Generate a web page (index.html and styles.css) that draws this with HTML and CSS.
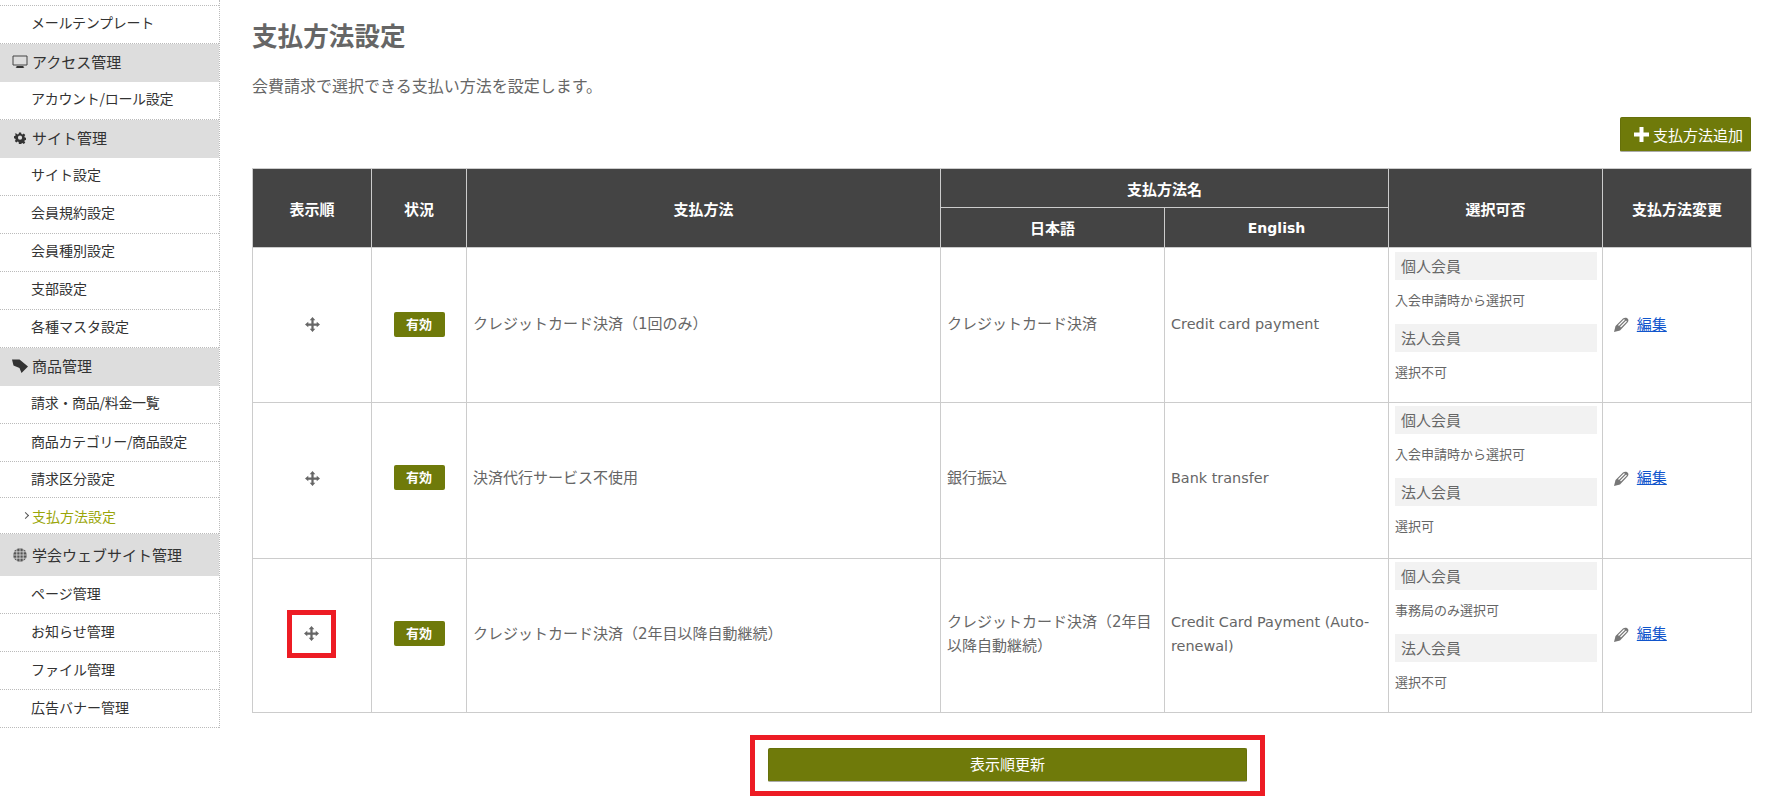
FILE: index.html
```html
<!DOCTYPE html>
<html lang="ja">
<head>
<meta charset="utf-8">
<title>支払方法設定</title>
<link rel="stylesheet" href="styles.css">
</head>
<body>
<div class="page">
  <aside class="sidebar">
    <a class="item item-kana">メールテンプレート</a>
    <div class="group">
      <svg class="gicon" viewBox="0 0 16 16"><path class="ol" d="M1 2h14v9H1z"/><path d="M4.500 12h7v1.200l1 .8h-9l1-.8z"/></svg>
      アクセス管理
    </div>
    <a class="item item-kana">アカウント/ロール設定</a>
    <div class="group">
      <svg class="gicon gicon-gear" viewBox="0 0 16 16"><path fill-rule="evenodd" d="M6.500 0h3l.5 2.300 1.400.6 2-1.300 2.100 2.100-1.300 2 .6 1.400 2.200.5v3l-2.200.5-.6 1.400 1.300 2-2.100 2.100-2-1.300-1.400.6-.5 2.100h-3L6 13.700l-1.400-.6-2 1.300L.5 12.300l1.300-2-.6-1.400L-1 8.400v-3l2.200-.5.6-1.400-1.300-2L2.600 1.600l2 1.300L6 2.300zM8 4.500a3 3 0 1 0 0 6 3 3 0 0 0 0-6z" transform="translate(.6 .6) scale(.93)"/></svg>
      サイト管理
    </div>
    <a class="item">サイト設定</a>
    <a class="item">会員規約設定</a>
    <a class="item">会員種別設定</a>
    <a class="item">支部設定</a>
    <a class="item">各種マスタ設定</a>
    <div class="group">
      <svg class="gicon" viewBox="0 0 16 16"><path d="M0 1.500h7.500L16 8.500 9.500 15 7.500 10 1.500 7.500z"/></svg>
      商品管理
    </div>
    <a class="item item-kana">請求・商品/料金一覧</a>
    <a class="item item-kana item-low">商品カテゴリー/商品設定</a>
    <a class="item item-short item-low">請求区分設定</a>
    <a class="item item-short item-active">支払方法設定</a>
    <div class="group group-tall">
      <svg class="gicon" viewBox="0 0 16 16"><circle cx="8" cy="8" r="6.800" fill="#555"/><path class="grid" d="M8 1v14M4.800 2v12M11.200 2v12M1 8h14M2 4.800h12M2 11.200h12"/></svg>
      学会ウェブサイト管理
    </div>
    <a class="item item-low">ページ管理</a>
    <a class="item item-low">お知らせ管理</a>
    <a class="item item-low">ファイル管理</a>
    <a class="item item-low">広告バナー管理</a>
  </aside>

  <main class="content">
    <h1 class="title">支払方法設定</h1>
    <p class="lead">会費請求で選択できる支払い方法を設定します。</p>
    <div class="toolbar">
      <button class="btn-add" type="button">
        <svg class="plus" viewBox="0 0 15 15"><path d="M5.500 0h4v5.500H15v4H9.500V15h-4V9.500H0v-4h5.500z"/></svg>
        支払方法追加
      </button>
    </div>

    <table class="methods">
      <colgroup>
        <col class="c1"><col class="c2"><col class="c3"><col class="c4"><col class="c5"><col class="c6"><col class="c7">
      </colgroup>
      <thead>
        <tr class="head-a">
          <th rowspan="2">表示順</th>
          <th rowspan="2">状況</th>
          <th rowspan="2">支払方法</th>
          <th colspan="2">支払方法名</th>
          <th rowspan="2">選択可否</th>
          <th rowspan="2">支払方法変更</th>
        </tr>
        <tr class="head-b">
          <th>日本語</th>
          <th class="en-head">English</th>
        </tr>
      </thead>
      <tbody>
        <tr class="row-a">
          <td class="center">
            <svg class="move" viewBox="0 0 16 16"><path d="M8 0l3 3.500H9.200V6.800h3.300V5L16 8l-3.500 3V9.200H9.200v3.300H11L8 16l-3-3.500h1.800V9.200H3.500V11L0 8l3.500-3v1.800h3.300V3.500H5z"/></svg>
          </td>
          <td class="center"><span class="badge">有効</span></td>
          <td>クレジットカード決済（1回のみ）</td>
          <td>クレジットカード決済</td>
          <td class="en">Credit card payment</td>
          <td class="avail">
            <div class="label">個人会員</div>
            <div class="note">入会申請時から選択可</div>
            <div class="label">法人会員</div>
            <div class="note">選択不可</div>
          </td>
          <td class="edit">
            <svg class="pencil" viewBox="0 0 16 16"><path class="pencil-body" d="M1 15l1.500-6L10 1.500c1.500-1 4-1 5 .5s0 3-1 4l-7 7.500z"/><path class="pencil-slit" d="M11.500 2.500 5.500 8.500M13.500 4 7.500 10"/></svg>
            <a class="link" href="#">編集</a>
          </td>
        </tr>
        <tr class="row-b">
          <td class="center">
            <svg class="move" viewBox="0 0 16 16"><path d="M8 0l3 3.500H9.200V6.800h3.300V5L16 8l-3.500 3V9.200H9.200v3.300H11L8 16l-3-3.500h1.800V9.200H3.500V11L0 8l3.500-3v1.800h3.300V3.500H5z"/></svg>
          </td>
          <td class="center"><span class="badge">有効</span></td>
          <td>決済代行サービス不使用</td>
          <td>銀行振込</td>
          <td class="en">Bank transfer</td>
          <td class="avail">
            <div class="label">個人会員</div>
            <div class="note">入会申請時から選択可</div>
            <div class="label">法人会員</div>
            <div class="note">選択可</div>
          </td>
          <td class="edit">
            <svg class="pencil" viewBox="0 0 16 16"><path class="pencil-body" d="M1 15l1.500-6L10 1.500c1.500-1 4-1 5 .5s0 3-1 4l-7 7.500z"/><path class="pencil-slit" d="M11.500 2.500 5.500 8.500M13.500 4 7.500 10"/></svg>
            <a class="link" href="#">編集</a>
          </td>
        </tr>
        <tr class="row-c">
          <td class="center">
            <span class="mark-icon">
              <svg class="move" viewBox="0 0 16 16"><path d="M8 0l3 3.500H9.200V6.800h3.300V5L16 8l-3.500 3V9.200H9.200v3.300H11L8 16l-3-3.500h1.800V9.200H3.500V11L0 8l3.500-3v1.800h3.300V3.500H5z"/></svg>
            </span>
          </td>
          <td class="center"><span class="badge">有効</span></td>
          <td>クレジットカード決済（2年目以降自動継続）</td>
          <td>クレジットカード決済（2年目以降自動継続）</td>
          <td class="en">Credit Card Payment (Auto-renewal)</td>
          <td class="avail">
            <div class="label">個人会員</div>
            <div class="note">事務局のみ選択可</div>
            <div class="label">法人会員</div>
            <div class="note">選択不可</div>
          </td>
          <td class="edit">
            <svg class="pencil" viewBox="0 0 16 16"><path class="pencil-body" d="M1 15l1.500-6L10 1.500c1.500-1 4-1 5 .5s0 3-1 4l-7 7.500z"/><path class="pencil-slit" d="M11.500 2.500 5.500 8.500M13.500 4 7.500 10"/></svg>
            <a class="link" href="#">編集</a>
          </td>
        </tr>
      </tbody>
    </table>

    <div class="mark-submit">
      <button class="btn-submit" type="button">表示順更新</button>
    </div>
  </main>
</div>
</body>
</html>
```

FILE: styles.css
```css
* { box-sizing: border-box; }

html, body {
  margin: 0;
  height: 805px;
  overflow: hidden;
  background: #fff;
}

body {
  font-family: "DejaVu Sans", "Noto Sans CJK JP", sans-serif;
  font-size: 15px;
  color: #666;
}

.page {
  display: flex;
  align-items: flex-start;
}

/* Sidebar */
.sidebar {
  flex: 0 0 220px;
  padding-top: 5px;
  border-right: 1px dotted #bbb;
  font-family: "Noto Sans CJK JP", sans-serif;
  color: #333;
}

.sidebar::before {
  content: "";
  display: block;
  border-top: 1px dotted #bbb;
}

.item {
  display: flex;
  align-items: center;
  height: 38px;
  padding: 0 0 6px 31px;
  font-size: 14px;
  line-height: 20px;
  color: #333;
  border-bottom: 1px dotted #bbb;
}

.item-low { padding-bottom: 4px; }
.item-kana { letter-spacing: -.3px; }
.item-short { height: 36px; }

.item-active {
  position: relative;
  padding-bottom: 0;
  padding-left: 32px;
  color: #9aa60a;
}

.item-active::before {
  content: "";
  position: absolute;
  left: 23px;
  top: 15px;
  width: 4px;
  height: 4px;
  border-top: 1px solid #555;
  border-right: 1px solid #555;
  transform: rotate(45deg);
}

.group {
  display: flex;
  align-items: center;
  gap: 4px;
  height: 38px;
  padding: 0 0 3px 12px;
  background: #ddd;
  font-size: 15px;
  line-height: 20px;
  color: #333;
}

.group-tall { height: 42px; padding-bottom: 0; }

.gicon {
  flex: none;
  width: 16px;
  height: 16px;
  fill: #333;
}

.gicon-gear {
  width: 12px;
  height: 12px;
  margin: 0 2px;
}

.gicon .ol {
  fill: none;
  stroke: #444;
  stroke-width: 1;
}

.gicon .grid {
  fill: none;
  stroke: #ddd;
  stroke-width: .8;
}

/* Main */
.content {
  flex: 1;
  min-width: 0;
  padding: 0 23px 0 32px;
}

.title {
  margin: 0;
  padding-top: 17px;
  font-family: "Noto Sans CJK JP", sans-serif;
  font-size: 25.6px;
  line-height: 36px;
  font-weight: 700;
  color: #666;
}

.lead {
  margin: 20px 0 0;
  font-family: "Noto Sans CJK JP", sans-serif;
  font-size: 16px;
  line-height: 24px;
  color: #666;
}

.toolbar {
  display: flex;
  justify-content: flex-end;
  margin-top: 20px;
}

.btn-add {
  display: flex;
  align-items: center;
  gap: 4px;
  width: 131px;
  height: 35px;
  padding: 0 0 0 13px;
  border: 1px solid #66700a;
  border-bottom-color: #aaa;
  border-radius: 2px;
  background: #6f7a0a;
  font-family: "Noto Sans CJK JP", sans-serif;
  font-size: 15px;
  line-height: 20px;
  color: #fff;
}

.plus {
  flex: none;
  width: 15px;
  height: 15px;
  fill: #fff;
}

/* Table */
.methods {
  width: 1499px;
  margin-top: 16px;
  table-layout: fixed;
  border-collapse: collapse;
  font-size: 15px;
}

.c1 { width: 119px; }
.c2 { width: 95px; }
.c3 { width: 474px; }
.c4 { width: 224px; }
.c5 { width: 224px; }
.c6 { width: 214px; }
.c7 { width: 149px; }

.methods th,
.methods td {
  border: 1px solid #ccc;
}

.methods th {
  padding: 0;
  background: #444;
  color: #fff;
  font-size: 15px;
  font-weight: 700;
  text-align: center;
}

.methods th.en-head { font-size: 14px; }

.head-a { height: 39px; }
.head-b { height: 40px; }

.methods td {
  padding: 6px;
  font-family: "DejaVu Sans", "Noto Sans CJK JP", sans-serif;
  line-height: 24px;
  vertical-align: middle;
}

.methods td.en { font-size: 14.4px; }

.row-a { height: 155px; }
.row-b { height: 156px; }
.row-c { height: 154px; }

.row-a td { padding-bottom: 8px; }
.row-b td { padding-bottom: 12px; }
.row-c td { padding-bottom: 10px; }

.methods td.center { text-align: center; }

.move {
  display: inline-block;
  width: 15px;
  height: 15px;
  vertical-align: middle;
  fill: #666;
}

.badge {
  display: inline-block;
  width: 51px;
  height: 25px;
  border-radius: 2px;
  background: #6f7a0a;
  font-family: "Noto Sans CJK JP", sans-serif;
  font-size: 13px;
  font-weight: 700;
  line-height: 23px;
  color: #fff;
  text-align: center;
}

.label {
  height: 28px;
  padding-left: 6px;
  background: #f2f2f2;
  font-family: "Noto Sans CJK JP", sans-serif;
  font-size: 15px;
  line-height: 27px;
}

.note {
  height: 44px;
  font-family: "Noto Sans CJK JP", sans-serif;
  font-size: 13px;
  line-height: 40px;
}

.methods td.avail {
  padding: 4px 5px 0 6px;
  vertical-align: top;
}

.methods .row-b td.avail { padding-top: 3px; }
.methods .row-c td.avail { padding-top: 3px; }

.methods td.edit {
  padding-left: 10px;
  white-space: nowrap;
}

.pencil {
  display: inline-block;
  width: 16px;
  height: 16px;
  margin-right: 3px;
  vertical-align: middle;
}

.pencil-body { fill: #777; }

.pencil-slit {
  fill: none;
  stroke: #fff;
  stroke-width: 1.100;
}

.link {
  font-family: "Noto Sans CJK JP", sans-serif;
  font-size: 15px;
  color: #1155cc;
  text-decoration: underline;
}

/* Callouts from the original annotation */
.mark-icon {
  display: inline-flex;
  align-items: center;
  justify-content: center;
  width: 49px;
  height: 48px;
  margin-right: 2px;
  border: 5px solid #ed1c24;
  vertical-align: middle;
}

.mark-submit {
  width: 515px;
  height: 61px;
  margin: 22px 0 0 498px;
  padding: 8px 13px;
  border: 5px solid #ed1c24;
}

.btn-submit {
  display: block;
  width: 100%;
  height: 34px;
  padding: 0 0 2px;
  border: 1px solid #66700a;
  border-bottom-color: #aaa;
  border-radius: 2px;
  background: #6f7a0a;
  font-family: "Noto Sans CJK JP", sans-serif;
  font-size: 15px;
  line-height: 20px;
  color: #fff;
  text-align: center;
}
```
